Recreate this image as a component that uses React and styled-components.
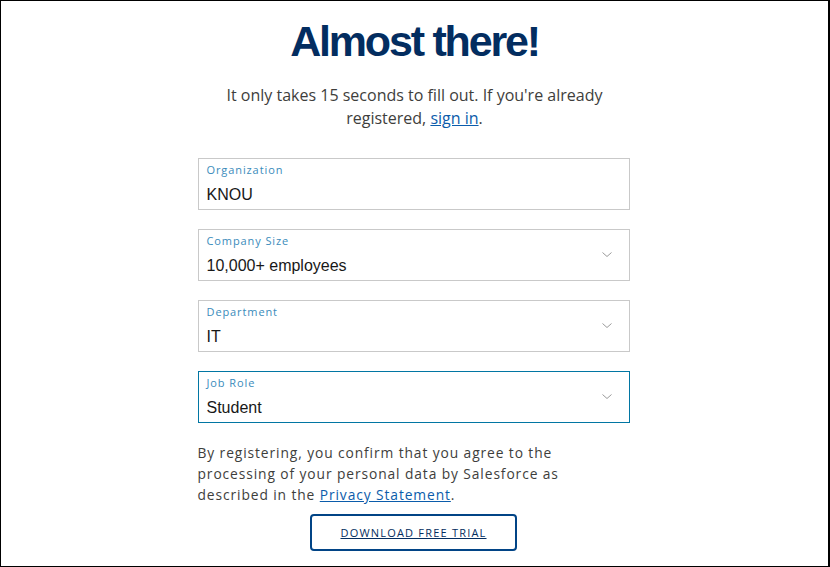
import styled, { createGlobalStyle } from "styled-components";

const GlobalStyle = createGlobalStyle`
  html, body {
    margin: 0;
    padding: 0;
    background: #fff;
  }
  * {
    box-sizing: border-box;
  }
`;

const fields = [
  { label: "Organization", value: "KNOU", select: false },
  { label: "Company Size", value: "10,000+ employees", select: true },
  { label: "Department", value: "IT", select: true },
  { label: "Job Role", value: "Student", select: true, focused: true },
];

const Chevron = () => (
  <svg width="10" height="5" viewBox="0 0 10 5">
    <path d="M0.5 0.5 L5 4.5 L9.5 0.5" fill="none" stroke="#9a9a9a" strokeWidth="1" />
  </svg>
);

const App = () => {
  return (
    <Frame>
      <GlobalStyle />
      <Title>Almost there!</Title>
      <Intro>
        It only takes 15 seconds to fill out. If you're already
        <br />
        registered, <TextLink href="#">sign in</TextLink>.
      </Intro>
      <Form>
        {fields.map((field) => (
          <Field key={field.label} $focused={field.focused}>
            <FieldLabel>{field.label}</FieldLabel>
            <FieldValue>{field.value}</FieldValue>
            {field.select && (
              <ChevronWrap>
                <Chevron />
              </ChevronWrap>
            )}
          </Field>
        ))}
        <Consent>
          By registering, you confirm that you agree to the
          <br />
          processing of your personal data by Salesforce as
          <br />
          described in the <TextLink href="#">Privacy Statement</TextLink>.
        </Consent>
        <ButtonRow>
          <TrialButton>DOWNLOAD FREE TRIAL</TrialButton>
        </ButtonRow>
      </Form>
    </Frame>
  );
};

const Frame = styled.div`
  width: 830px;
  height: 567px;
  border: 1px solid #000;
  border-right-width: 2px;
  display: flex;
  flex-direction: column;
  align-items: center;
  overflow: hidden;
  font-family: "Open Sans", "Liberation Sans", sans-serif;
`;

const Title = styled.h1`
  margin: 14px 0 0;
  font-family: "Liberation Sans", Arial, sans-serif;
  font-weight: 700;
  font-size: 43px;
  line-height: 52px;
  letter-spacing: -2.2px;
  color: #032d60;
`;

const Intro = styled.p`
  margin: 17px 0 0;
  text-align: center;
  font-size: 16px;
  line-height: 23px;
  color: #3e3e3c;
`;

const TextLink = styled.a`
  color: #0b5cab;
  text-decoration: underline;
`;

const Form = styled.div`
  width: 432px;
  margin: 28px 0 0 -2px;
  display: flex;
  flex-direction: column;
  gap: 19px;
`;

const Field = styled.div`
  position: relative;
  height: 52px;
  border: 1px solid ${(props) => (props.$focused ? "#0176a3" : "#c9c9c9")};
  padding: 4px 8px 0;
  display: flex;
  flex-direction: column;
`;

const FieldLabel = styled.span`
  font-size: 11px;
  line-height: 14px;
  letter-spacing: 0.9px;
  color: #3a8bbb;
`;

const FieldValue = styled.span`
  margin-top: 8px;
  font-family: "Liberation Sans", Arial, sans-serif;
  font-size: 16px;
  line-height: 20px;
  color: #181818;
`;

const ChevronWrap = styled.div`
  position: absolute;
  right: 17px;
  top: 22px;
  display: flex;
`;

const Consent = styled.p`
  margin: 0;
  font-size: 13.8px;
  line-height: 21px;
  letter-spacing: 0.9px;
  color: #3e3e3c;
`;

const ButtonRow = styled.div`
  display: flex;
  justify-content: center;
  margin-top: -10px;
`;

const TrialButton = styled.button`
  width: 207px;
  height: 37px;
  background: #fff;
  border: 2px solid #014486;
  border-radius: 4px;
  font-family: "Open Sans", "Liberation Sans", sans-serif;
  font-size: 11px;
  letter-spacing: 1.2px;
  color: #032d60;
  text-decoration: underline;
  cursor: pointer;
`;

export default App;
